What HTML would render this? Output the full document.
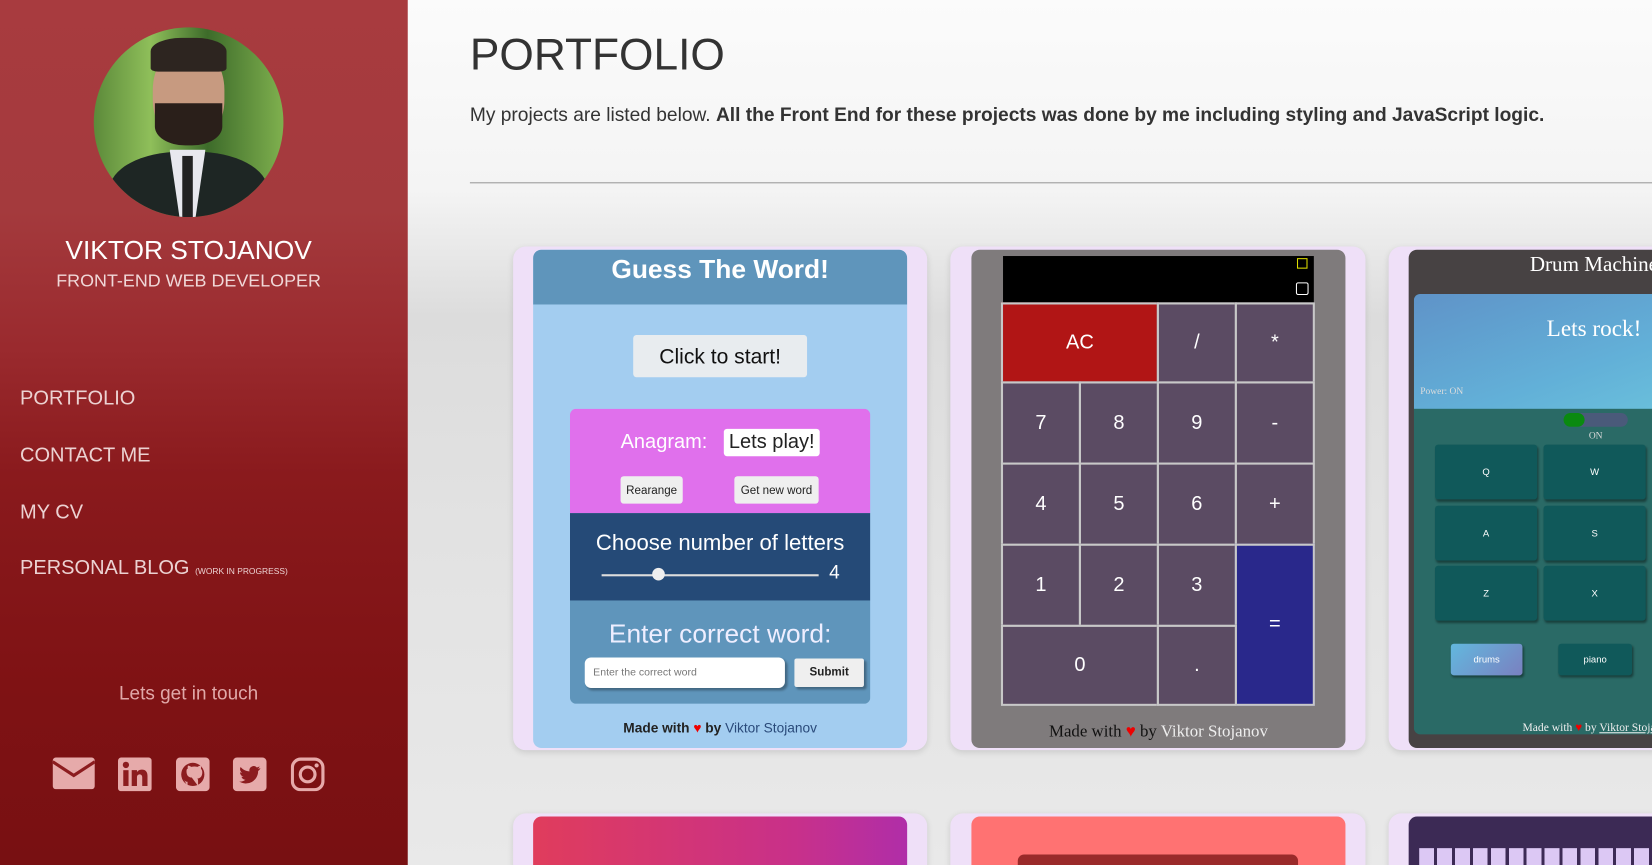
<!DOCTYPE html>
<html><head><meta charset="utf-8"><style>
*{margin:0;padding:0;box-sizing:border-box}
html,body{width:1652px;height:865px;overflow:hidden;font-family:"Liberation Sans",Arial,sans-serif}
#w{position:absolute;left:0;top:0;width:1568px;height:821px;transform:scale(1.0536);transform-origin:0 0;background:linear-gradient(180deg,#fbfbfb 0,#f4f4f4 180px,#dcdcdc 300px,#e2e2e2 500px,#e9e9e9 821px);overflow:hidden}
.a{position:absolute}
#side{left:0;top:0;width:387px;height:821px;background:linear-gradient(180deg,#a83b3f 0,#a43a3d 200px,#9a2a2e 330px,#8a1a1d 450px,#7f1214 650px,#781012 821px);color:#f2dede}
.nav{left:19px;font-size:19px;color:#ecd2d2}
.card{background:#efe0f8;border-radius:12px;box-shadow:0 2px 6px rgba(0,0,0,.12)}
.c{text-align:center}
.calc{position:absolute;background:#5b4b63;border:2px solid #c8c8c8;color:#fff;font-size:19px;display:flex;align-items:center;justify-content:center}
.pad{position:absolute;background:#10595a;border-radius:3px;box-shadow:1px 2px 2px rgba(0,0,0,.4);color:#fff;font-size:9px;display:flex;align-items:center;justify-content:center;width:97px;height:52px}
</style></head><body><div id="w">
<div id="side" class="a">
 <div class="a" style="left:89px;top:26px;width:180px;height:180px;border-radius:50%;overflow:hidden;background:linear-gradient(90deg,#5c8a3a,#8fbf5a 30%,#3d6b2a 60%,#7fb04e);">
  <div class="a" style="left:56px;top:18px;width:68px;height:92px;border-radius:45%;background:#c79a80"></div>
  <div class="a" style="left:54px;top:10px;width:72px;height:32px;border-radius:40% 40% 10% 10%;background:#2d2520"></div>
  <div class="a" style="left:58px;top:72px;width:64px;height:40px;border-radius:0 0 45% 45%;background:#2a1f1a"></div>
  <div class="a" style="left:15px;top:118px;width:150px;height:80px;border-radius:45% 45% 0 0;background:#1e2624"></div>
  <div class="a" style="left:72px;top:116px;width:34px;height:70px;background:#e8e8ee;clip-path:polygon(0 0,100% 0,70% 100%,30% 100%)"></div>
  <div class="a" style="left:84px;top:122px;width:10px;height:60px;background:#222"></div>
 </div>
 <div class="a c" style="left:0;width:358px;top:224px;font-size:25px;color:#fff">VIKTOR STOJANOV</div>
 <div class="a c" style="left:0;width:358px;top:257px;font-size:17px;color:#f0d8d8">FRONT-END WEB DEVELOPER</div>
 <div class="a nav" style="top:368px">PORTFOLIO</div>
 <div class="a nav" style="top:422px">CONTACT ME</div>
 <div class="a nav" style="top:476px">MY CV</div>
 <div class="a nav" style="top:529px">PERSONAL BLOG <span style="font-size:8px">(WORK IN PROGRESS)</span></div>
 <div class="a c" style="left:0;width:358px;top:648px;font-size:18px;color:#e0a8a8">Lets get in touch</div>
 <svg class="a" style="left:50px;top:719px" width="40" height="32" viewBox="0 0 40 32"><rect x="0" y="0" width="40" height="30" rx="3" fill="#e6aaaa"/><path d="M0 4 L20 17 L40 4" stroke="#8c1c1f" stroke-width="3" fill="none"/></svg>
 <svg class="a" style="left:112px;top:719px" width="32" height="32" viewBox="0 0 32 32"><rect width="32" height="32" rx="3" fill="#e6aaaa"/><rect x="5" y="12" width="5" height="15" fill="#8c1c1f"/><circle cx="7.5" cy="7" r="3" fill="#8c1c1f"/><path d="M13 12h5v2c1-2 3-2.5 5-2.5 3 0 5 2 5 6V27h-5v-8c0-2-1-3-2.5-3S18 17 18 19v8h-5z" fill="#8c1c1f"/></svg>
 <svg class="a" style="left:167px;top:719px" width="32" height="32" viewBox="0 0 32 32"><rect width="32" height="32" rx="4" fill="#e6aaaa"/><circle cx="16" cy="16" r="11" fill="#8c1c1f"/><path d="M11 27v-4c-2 0-3-1-4-3M21 27v-5c0-2-1-2-1-2 3 0 5-2 5-6 0-1.5-.5-2.5-1.3-3.3.3-1 .2-2.2-.2-3-1 0-2 .5-3 1.2-2-.5-4-.5-6 0-1-.7-2-1.2-3-1.2-.4.8-.5 2-.2 3C10.5 10.5 10 11.5 10 13c0 4 2 6 5 6" fill="#e6aaaa"/></svg>
 <svg class="a" style="left:221px;top:719px" width="32" height="32" viewBox="0 0 32 32"><rect width="32" height="32" rx="4" fill="#e6aaaa"/><path d="M26 10c-.8.4-1.6.6-2.4.7.9-.5 1.5-1.3 1.8-2.3-.8.5-1.7.8-2.6 1a4.1 4.1 0 0 0-7 3.7C12.4 13 9.4 11.4 7.4 9c-1.1 1.9-.5 4.3 1.3 5.5-.7 0-1.3-.2-1.900-.5 0 2 1.4 3.7 3.3 4.1-.6.2-1.3.2-1.9.1.5 1.7 2.1 2.8 3.8 2.9A8.3 8.3 0 0 1 6 22.8 11.7 11.7 0 0 0 24 12.8c.8-.6 1.5-1.4 2-2.2z" fill="#8c1c1f"/></svg>
 <svg class="a" style="left:276px;top:719px" width="32" height="32" viewBox="0 0 32 32"><rect x="1.5" y="1.5" width="29" height="29" rx="8" fill="none" stroke="#e6aaaa" stroke-width="3"/><circle cx="16" cy="16" r="7" fill="none" stroke="#e6aaaa" stroke-width="3"/><circle cx="24.5" cy="7.5" r="2" fill="#e6aaaa"/></svg>
</div>
<div class="a" style="left:446px;top:28px;font-size:42px;color:#333">PORTFOLIO</div>
<div class="a" style="left:446px;top:99px;font-size:18.2px;color:#333">My projects are listed below. <b>All the Front End for these projects was done by me including styling and JavaScript logic.</b></div>
<div class="a" style="left:446px;top:173px;width:1122px;height:1px;background:#999"></div>

<!-- card1 -->
<div class="a card" style="left:487px;top:234px;width:393px;height:478px"></div>
<div class="a" style="left:506px;top:237px;width:355px;height:473px;background:#a3cdf0;border-radius:8px;overflow:hidden">
 <div class="a c" style="left:0;top:0;width:355px;height:52px;background:#5f95bb;color:#fff;font-size:25px;font-weight:bold;padding-top:5px">Guess The Word!</div>
 <div class="a c" style="left:95px;top:81px;width:165px;height:40px;background:#e8ecef;border-radius:3px;font-size:20px;line-height:42px;color:#111">Click to start!</div>
 <div class="a" style="left:35px;top:151px;width:285px;height:280px;border-radius:6px;overflow:hidden">
  <div class="a" style="left:0;top:0;width:285px;height:99px;background:#e070ec"></div>
  <div class="a" style="left:48px;top:21px;font-size:19px;color:#fff">Anagram:</div>
  <div class="a c" style="left:146px;top:19px;width:91px;height:26px;background:#fff;border-radius:3px;font-size:19px;line-height:26px;color:#222">Lets play!</div>
  <div class="a c" style="left:48px;top:64px;width:59px;height:26px;background:#efefef;border-radius:3px;font-size:11px;line-height:28px;color:#222">Rearange</div>
  <div class="a c" style="left:156px;top:64px;width:80px;height:26px;background:#efefef;border-radius:3px;font-size:11px;line-height:28px;color:#222">Get new word</div>
  <div class="a" style="left:0;top:99px;width:285px;height:83px;background:#254a77"></div>
  <div class="a c" style="left:0;top:116px;width:285px;font-size:21px;color:#fff">Choose number of letters</div>
  <div class="a" style="left:30px;top:157px;width:206px;height:2px;background:#ddd"></div>
  <div class="a" style="left:78px;top:151px;width:12px;height:12px;border-radius:50%;background:#eee"></div>
  <div class="a" style="left:246px;top:145px;font-size:18px;color:#fff">4</div>
  <div class="a" style="left:0;top:182px;width:285px;height:98px;background:#5f95bb"></div>
  <div class="a c" style="left:0;top:200px;width:285px;font-size:25px;color:#eef">Enter correct word:</div>
  <div class="a" style="left:14px;top:236px;width:190px;height:29px;background:#fff;border-radius:6px;font-size:10px;color:#777;padding:9px 8px;box-shadow:2px 2px 2px rgba(0,0,0,.3)">Enter the correct word</div>
  <div class="a c" style="left:213px;top:237px;width:66px;height:27px;background:#efefef;border-radius:2px;font-size:11px;line-height:27px;font-weight:bold;color:#222;box-shadow:2px 2px 2px rgba(0,0,0,.3)">Submit</div>
 </div>
 <div class="a c" style="left:0;top:446px;width:355px;font-size:13px;color:#222"><b>Made with <span style="color:#e00">♥</span> by</b> <span style="color:#2a4a7a">Viktor Stojanov</span></div>
</div>

<!-- card2 -->
<div class="a card" style="left:902px;top:234px;width:394px;height:478px"></div>
<div class="a" style="left:922px;top:237px;width:355px;height:473px;background:#7f7b7c;border-radius:8px;overflow:hidden">
 <div class="a" style="left:30px;top:6px;width:295px;height:44px;background:#000"></div>
 <div class="a" style="left:309px;top:8px;width:10px;height:10px;border:1.5px solid #dd0;"></div>
 <div class="a" style="left:308px;top:31px;width:12px;height:12px;border:1.5px solid #fff;border-radius:2px"></div>
 <div class="calc" style="left:28px;top:50px;width:150px;height:77px;background:#b11515">AC</div>
 <div class="calc" style="left:176px;top:50px;width:76px;height:77px">/</div>
 <div class="calc" style="left:250px;top:50px;width:76px;height:77px">*</div>
 <div class="calc" style="left:28px;top:125px;width:76px;height:79px">7</div>
 <div class="calc" style="left:102px;top:125px;width:76px;height:79px">8</div>
 <div class="calc" style="left:176px;top:125px;width:76px;height:79px">9</div>
 <div class="calc" style="left:250px;top:125px;width:76px;height:79px">-</div>
 <div class="calc" style="left:28px;top:202px;width:76px;height:79px">4</div>
 <div class="calc" style="left:102px;top:202px;width:76px;height:79px">5</div>
 <div class="calc" style="left:176px;top:202px;width:76px;height:79px">6</div>
 <div class="calc" style="left:250px;top:202px;width:76px;height:79px">+</div>
 <div class="calc" style="left:28px;top:279px;width:76px;height:79px">1</div>
 <div class="calc" style="left:102px;top:279px;width:76px;height:79px">2</div>
 <div class="calc" style="left:176px;top:279px;width:76px;height:79px">3</div>
 <div class="calc" style="left:250px;top:279px;width:76px;height:154px;background:#29288b">=</div>
 <div class="calc" style="left:28px;top:356px;width:150px;height:77px">0</div>
 <div class="calc" style="left:176px;top:356px;width:76px;height:77px">.</div>
 <div class="a c" style="left:0;top:449px;width:355px;font-family:'Liberation Serif',serif;font-size:16px;color:#111">Made with <span style="color:#e00">♥</span> by <span style="color:#eee">Viktor Stojanov</span></div>
</div>

<!-- card3 -->
<div class="a card" style="left:1318px;top:234px;width:300px;height:478px"></div>
<div class="a" style="left:1337px;top:237px;width:300px;height:473px;background:#474243;border-radius:8px;overflow:hidden">
 <div class="a" style="left:115px;top:3px;font-family:'Liberation Serif',serif;font-size:20px;color:#fff;white-space:nowrap">Drum Machine</div>
 <div class="a" style="left:5px;top:42px;width:295px;height:418px;background:#2a6a66;border-radius:6px;overflow:hidden">
  <div class="a" style="left:0;top:0;width:295px;height:109px;background:linear-gradient(160deg,#5f93c8,#62b0d8 60%,#6cc4dc)"></div>
  <div class="a" style="left:126px;top:20px;font-family:'Liberation Serif',serif;font-size:22px;color:#fff">Lets rock!</div>
  <div class="a" style="left:6px;top:87px;font-family:'Liberation Serif',serif;font-size:9px;color:#ddd">Power: ON</div>
  <div class="a" style="left:142px;top:113px;width:61px;height:13px;border-radius:7px;background:#4a5a7a"></div>
  <div class="a" style="left:142px;top:113px;width:20px;height:13px;border-radius:7px;background:#0a8a10"></div>
  <div class="a" style="left:166px;top:129px;font-family:'Liberation Serif',serif;font-size:9px;color:#ddd">ON</div>
  <div class="pad" style="left:20px;top:143px">Q</div>
  <div class="pad" style="left:123px;top:143px">W</div>
  <div class="pad" style="left:20px;top:201px">A</div>
  <div class="pad" style="left:123px;top:201px">S</div>
  <div class="pad" style="left:20px;top:258px">Z</div>
  <div class="pad" style="left:123px;top:258px">X</div>
  <div class="pad" style="left:35px;top:332px;width:68px;height:30px;background:linear-gradient(135deg,#62b8de,#7a80c0)">drums</div>
  <div class="pad" style="left:137px;top:332px;width:70px;height:30px">piano</div>
 </div>
 <div class="a" style="left:108px;top:448px;font-family:'Liberation Serif',serif;font-size:11px;color:#eee;white-space:nowrap">Made with <span style="color:#e00">♥</span> by <u>Viktor Stojanov</u></div>
</div>

<!-- row 2 -->
<div class="a card" style="left:487px;top:772px;width:393px;height:60px"></div>
<div class="a" style="left:506px;top:775px;width:355px;height:60px;border-radius:8px 8px 0 0;background:linear-gradient(90deg,#e03c5c,#c8308a 70%,#b02ea8)"></div>
<div class="a card" style="left:902px;top:772px;width:394px;height:60px"></div>
<div class="a" style="left:922px;top:775px;width:355px;height:60px;border-radius:8px 8px 0 0;background:#ff7272"></div>
<div class="a" style="left:966px;top:811px;width:266px;height:20px;border-radius:6px;background:#9a2a2a"></div>
<div class="a card" style="left:1318px;top:772px;width:300px;height:60px"></div>
<div class="a" style="left:1337px;top:775px;width:300px;height:60px;border-radius:8px 8px 0 0;background:#3c2a55"></div>
<div class="a" style="left:1347px;top:805px;width:230px;height:16px;background:repeating-linear-gradient(90deg,#dcc8f4 0,#dcc8f4 14px,#3c2a55 14px,#3c2a55 17px)"></div>
</div></body></html>
